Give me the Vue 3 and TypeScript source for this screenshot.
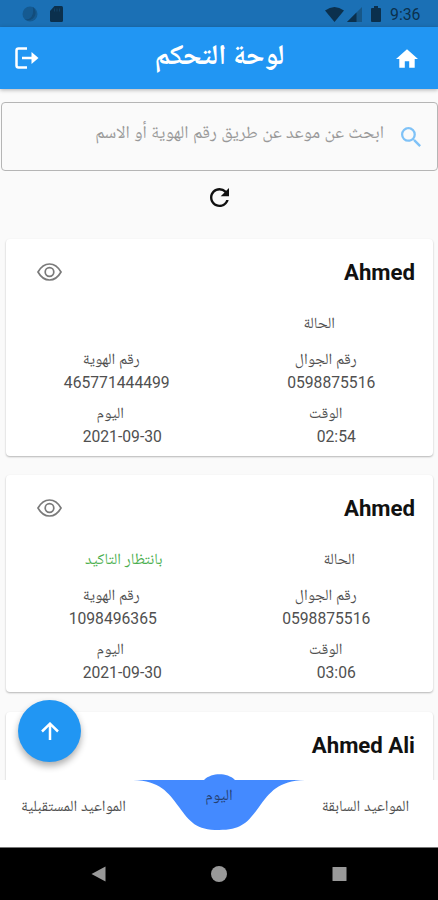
<script setup lang="ts">
interface Cell {
  label: string
  value: string
  kind: string
}
interface Appointment {
  name: string
  kind: string
  status: string
  cells: Cell[]
}

const appointments: Appointment[] = [
  {
    name: 'Ahmed',
    kind: 'plain',
    status: '',
    cells: [
      { label: 'رقم الجوال', value: '0598875516', kind: 'mobile' },
      { label: 'رقم الهوية', value: '465771444499', kind: 'ident' },
      { label: 'الوقت', value: '02:54', kind: 'time' },
      { label: 'اليوم', value: '2021-09-30', kind: 'day' },
    ],
  },
  {
    name: 'Ahmed',
    kind: 'pending',
    status: 'بانتظار التاكيد',
    cells: [
      { label: 'رقم الجوال', value: '0598875516', kind: 'mobile' },
      { label: 'رقم الهوية', value: '1098496365', kind: 'ident' },
      { label: 'الوقت', value: '03:06', kind: 'time' },
      { label: 'اليوم', value: '2021-09-30', kind: 'day' },
    ],
  },
  { name: 'Ahmed Ali', kind: 'partial', status: '', cells: [] },
]
</script>

<template>
  <div class="phone">
    <div class="status-bar">
      <svg class="sync" viewBox="0 0 16 16"><circle cx="8" cy="8" r="7.5" fill="#155a91" /><path d="M11 1.100A7.500 7.500 0 0 1 3 13.600Q12.500 14 11 1.100z" fill="#124c7b" /></svg>
      <svg class="sd" viewBox="0 0 13 16"><path d="M4.500 0H11.500Q13 0 13 1.500V14.500Q13 16 11.500 16H1.500Q0 16 0 14.500V5z" fill="#0b304d" /><path d="M4.500 2.500v3M7 2.500v3M9.500 2.500v3" stroke="#124268" stroke-width="1" /></svg>
      <span class="spacer"></span>
      <svg class="wifi" viewBox="0 0 19 15"><path d="M0 3.500Q9.500-3.500 19 3.500L9.500 15z" fill="#0b304d" /></svg>
      <svg class="signal" viewBox="0 0 15 15"><path d="M15 0V15H0z" fill="#175788" /><path d="M9.500 5.500V15H0z" fill="#0b304d" /></svg>
      <svg class="battery" viewBox="0 0 10 16"><path d="M3 0h4v2h2q1 0 1 1v12q0 1-1 1H1q-1 0-1-1V3q0-1 1-1h2z" fill="#0b304d" /></svg>
      <span class="clock">9:36</span>
    </div>

    <header class="app-bar">
      <svg class="logout" viewBox="0 0 24 22" fill="none" stroke="#fff" stroke-width="2.500"><path d="M12 1.500H3.500Q1.500 1.500 1.500 3.500V18.500Q1.500 20.500 3.500 20.500H12M7 11H19" /><path d="M16.500 5 23.500 11l-7 6z" fill="#fff" stroke="none" /></svg>
      <h1>لوحة التحكم</h1>
      <svg class="home" viewBox="2 3 20 17"><path d="M10 20v-6h4v6h5v-8h3L12 3 2 12h3v8z" fill="#fff" /></svg>
    </header>

    <main class="content">
      <div class="search">
        <span class="hint">ابحث عن موعد عن طريق رقم الهوية أو الاسم</span>
        <svg class="magnifier" viewBox="3 3 17.500 17.500"><path d="M15.500 14h-.79l-.28-.27A6.471 6.471 0 0 0 16 9.500 6.500 6.500 0 1 0 9.500 16c1.610 0 3.090-.59 4.230-1.570l.27.28v.79l5 4.990L20.490 19l-4.990-5zm-6 0C7.010 14 5 11.990 5 9.500S7.010 5 9.500 5 14 7.010 14 9.500 11.990 14 9.500 14z" fill="#7fc2f7" /></svg>
      </div>
      <div class="refresh">
        <svg viewBox="4 4 16 16"><path d="M17.650 6.350A7.958 7.958 0 0 0 12 4c-4.420 0-7.990 3.580-7.990 8s3.570 8 7.990 8c3.730 0 6.840-2.550 7.730-6h-2.080A5.990 5.990 0 0 1 12 18c-3.310 0-6-2.690-6-6s2.690-6 6-6c1.660 0 3.140.69 4.220 1.780L13 11h7V4l-2.350 2.350z" fill="#111" /></svg>
      </div>

      <article v-for="(item, i) in appointments" :key="i" class="card" :class="item.kind">
        <div class="card-head">
          <svg v-if="item.cells.length" class="eye" viewBox="0 0 25 18" fill="none" stroke="#7a7a7a" stroke-width="1.700"><path d="M1 9Q5.500 1 12.500 1T24 9Q19.500 17 12.500 17T1 9z" /><circle cx="12.500" cy="9" r="4.300" /></svg>
          <span class="spacer"></span>
          <h2>{{ item.name }}</h2>
        </div>
        <template v-if="item.cells.length">
          <div class="status-row">
            <span class="status-label">الحالة</span>
            <span class="status-value">{{ item.status }}</span>
          </div>
          <div class="cells">
            <div v-for="cell in item.cells" :key="cell.kind" class="cell" :class="cell.kind">
              <span class="label">{{ cell.label }}</span>
              <span class="value">{{ cell.value }}</span>
            </div>
          </div>
        </template>
      </article>
    </main>

    <nav class="tabs">
      <svg class="wave" viewBox="0 0 174 58"><path d="M1 6H72C76 2 82 .3 87.500 .3S99 2 103 6H173C146 7 138 18 127 33S110 56 87 56S58 48 47 33S28 7 1 6z" fill="#448aff" /></svg>
      <span class="tab future">المواعيد المستقبلية</span>
      <span class="tab today">اليوم</span>
      <span class="tab past">المواعيد السابقة</span>
    </nav>

    <div class="system-nav">
      <svg viewBox="0 0 16 16"><path d="M14.500 .5v15L.5 8z" fill="#999" /></svg>
      <svg viewBox="0 0 16 16"><circle cx="8" cy="8" r="8" fill="#999" /></svg>
      <svg viewBox="0 0 16 16"><rect x="1.500" y="1" width="14" height="14" rx=".6" fill="#999" /></svg>
    </div>

    <button class="fab" aria-label="top">
      <svg viewBox="0 0 18 18" fill="none" stroke="#fff" stroke-width="2.500"><path d="M9 18V2M1 9.500 9 1.700l8 7.800" /></svg>
    </button>
  </div>
</template>

<style>
body {
  margin: 0;
}
</style>

<style scoped>
.phone {
  position: relative;
  display: flex;
  flex-direction: column;
  width: 438px;
  height: 900px;
  overflow: hidden;
  background: #fafafa;
  font-family: Roboto, "Noto Naskh Arabic", "Noto Sans Arabic", "DejaVu Sans", sans-serif;
  color: #505050;
}
svg {
  display: block;
  flex: none;
}
.spacer {
  flex: 1;
}
.status-bar {
  display: flex;
  align-items: center;
  height: 27px;
  flex: none;
  box-sizing: border-box;
  padding: 1px 17px 0 22px;
  background: #1b70b5;
}
.sync {
  width: 16px;
  height: 16px;
}
.sd {
  width: 13px;
  height: 16px;
  margin-left: 12px;
}
.wifi {
  width: 19px;
  height: 15px;
}
.signal {
  width: 15px;
  height: 15px;
  margin-left: 3px;
}
.battery {
  width: 10px;
  height: 16px;
  margin-left: 9px;
}
.clock {
  width: 31px;
  margin-left: 9px;
  font-size: 15.800px;
  line-height: 20px;
  padding-top: 2px;
  color: #0b304d;
}
.app-bar {
  position: relative;
  display: flex;
  align-items: center;
  justify-content: space-between;
  height: 62px;
  flex: none;
  box-sizing: border-box;
  padding: 0 20px 0 15px;
  background: #2196f3;
  box-shadow: 0 1px 4px rgba(0, 0, 0, 0.3);
}
.logout {
  width: 24px;
  height: 22px;
}
.home {
  width: 22px;
  height: 19px;
}
h1 {
  margin: 0;
  padding: 0 0 6px 4px;
  font-size: 28.200px;
  font-weight: 700;
  line-height: 40px;
  color: #fff;
  white-space: nowrap;
}
.content {
  flex: 1;
  min-height: 0;
  overflow: hidden;
  padding-top: 13px;
}
.search {
  display: flex;
  align-items: center;
  justify-content: flex-end;
  height: 69px;
  box-sizing: border-box;
  margin: 0 0 0 1px;
  padding: 0 16px 6px 0;
  border: 1.500px solid #b5b5b5;
  border-radius: 4px;
}
.hint {
  direction: rtl;
  font-size: 17.850px;
  color: #999;
  white-space: nowrap;
}
.magnifier {
  width: 20px;
  height: 20px;
  margin: 6px 0 0 17px;
}
.refresh {
  display: flex;
  justify-content: center;
  padding: 17px 0 32px;
}
.refresh svg {
  width: 19px;
  height: 19px;
}
.card {
  height: 217px;
  margin: 0 5px 19.300px 6px;
  border-radius: 4px;
  background: #fff;
  box-shadow: 0 1px 2px rgba(0, 0, 0, 0.28);
}
.card-head {
  display: flex;
  align-items: center;
  height: 65px;
  padding: 0 18px 0 31px;
}
.eye {
  width: 25px;
  height: 18px;
}
h2 {
  margin: 0;
  padding-top: 1px;
  font-size: 22.200px;
  font-weight: 700;
  line-height: 30px;
  color: #111;
}
.status-row,
.cells {
  display: grid;
  grid-template-columns: 1fr 1fr;
  direction: rtl;
  text-align: center;
  white-space: nowrap;
}
.status-row {
  height: 43px;
  font-size: 15.500px;
  line-height: 39px;
}
.plain .status-label {
  padding-right: 14px;
}
.pending .status-label {
  padding-left: 26px;
}
.pending .status-value {
  padding-left: 22px;
  color: #4caf50;
}
.cell {
  display: flex;
  flex-direction: column;
  height: 54px;
}
.label {
  height: 24px;
  padding-right: 1px;
  font-size: 15.500px;
  line-height: 25px;
}
.ident .label {
  padding-right: 3px;
}
.day .label {
  padding-right: 5px;
}
.value {
  font-size: 15.700px;
  line-height: 23px;
  direction: ltr;
}
.plain .mobile .value,
.plain .ident .value {
  padding-left: 10px;
}
.plain .ident .value {
  padding-left: 8px;
}
.time .value,
.day .value {
  padding-left: 20px;
}
.day .value {
  padding-left: 19px;
}
.tabs {
  position: relative;
  height: 67px;
  flex: none;
  display: grid;
  grid-template-columns: 147px 144px 149px;
  text-align: center;
  white-space: nowrap;
  direction: ltr;
  background: #fff;
  border-bottom: 1px solid #777;
}
.wave {
  position: absolute;
  left: 132px;
  top: -6px;
  width: 174px;
  height: 58px;
}
.tab {
  position: relative;
  font-size: 15.500px;
  line-height: 52px;
}
.today {
  line-height: 30px;
  color: #263f70;
}
.system-nav {
  display: flex;
  align-items: center;
  justify-content: center;
  gap: 104px;
  height: 52px;
  flex: none;
  background: #000;
}
.system-nav svg {
  width: 16px;
  height: 16px;
}
.fab {
  position: absolute;
  left: 18px;
  top: 700px;
  display: flex;
  align-items: center;
  justify-content: center;
  width: 63px;
  height: 62px;
  padding: 0;
  border: 0;
  border-radius: 50%;
  background: #2196f3;
  box-shadow: 0 4px 7px rgba(0, 0, 0, 0.32);
}
.fab svg {
  width: 18px;
  height: 18px;
}
</style>
